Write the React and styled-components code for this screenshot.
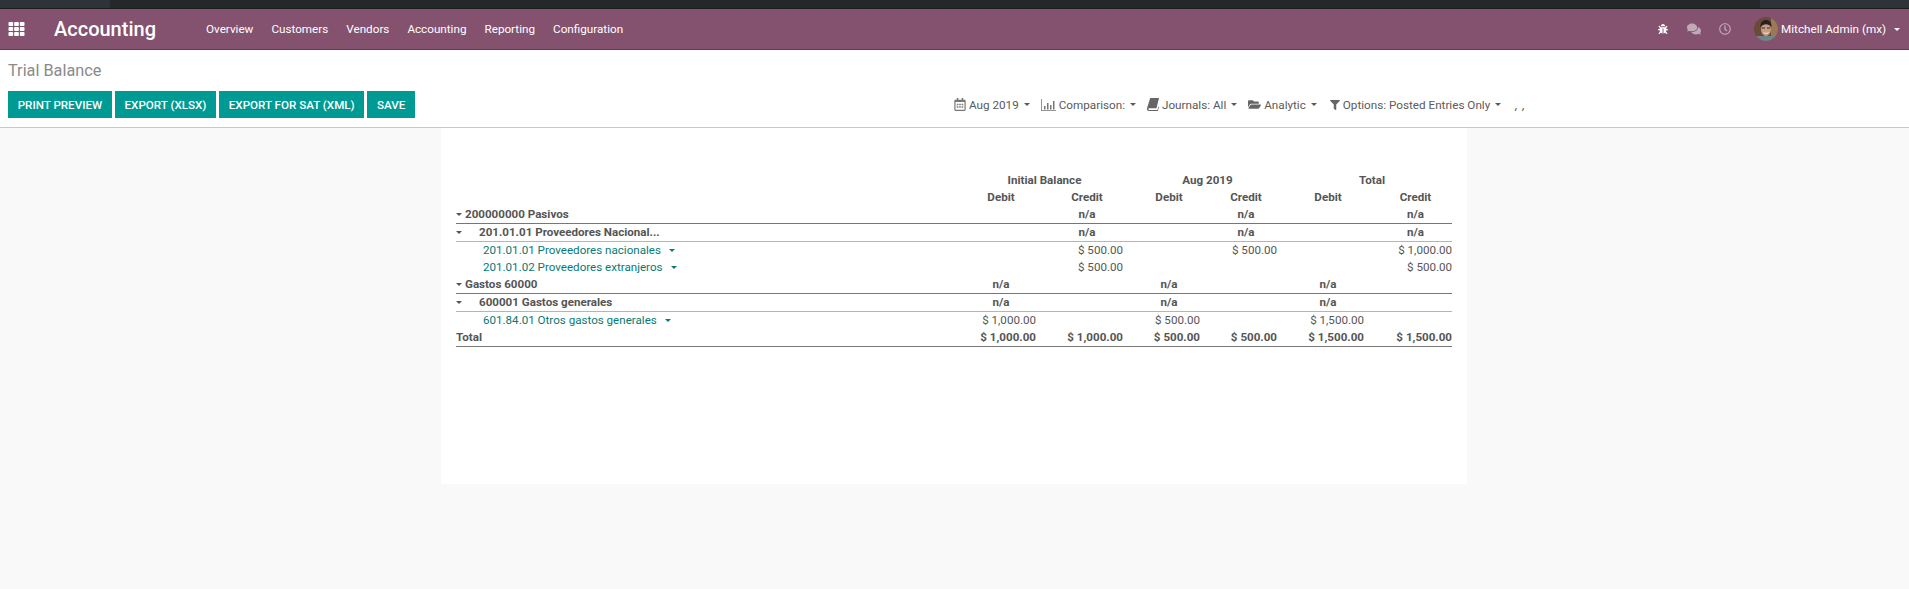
import React from 'react';
import styled, { createGlobalStyle } from 'styled-components';
import { FaBug, FaComments, FaFilter, FaFolderOpen, FaRegCalendarAlt, FaRegClock, FaTh } from 'react-icons/fa';

const GlobalStyle = createGlobalStyle`
    html, body {
        margin: 0;
        padding: 0;
        background-color: #f9f9f9;
        font-family: 'Roboto', 'Liberation Sans', sans-serif;
    }
`;

const Page = styled.div`
    display: flex;
    flex-direction: column;
    min-height: 589px;
    background-color: #f9f9f9;
`;

const WindowStrip = styled.div`
    display: flex;
    height: 9px;
    background-color: #24282b;
    box-shadow: inset 0 -1px 0 #1b1e20;
`;

const StripEdge = styled.div`
    width: ${props => props.$width}px;
    background-color: #2e3337;
    box-shadow: inset 0 -1px 0 #1b1e20;
`;

const StripFill = styled.div`
    flex: 1;
`;

const NavBar = styled.header`
    display: flex;
    align-items: center;
    box-sizing: border-box;
    height: 41px;
    padding: 0 9px 0 8px;
    background-color: #84526f;
    border-bottom: 1px solid #5f3a52;
    color: #fff;
`;

const AppsIcon = styled(FaTh)`
    width: 17px;
    height: 16px;
`;

const Brand = styled.span`
    margin-left: 29px;
    width: 152px;
    font-size: 20px;
    font-weight: 500;
`;

const Menu = styled.nav`
    display: flex;
    gap: 18px;
    font-size: 11.7px;
    font-weight: 400;
`;

const Systray = styled.div`
    display: flex;
    align-items: center;
    margin-left: auto;
`;

const TrayIcon = styled.span`
    display: flex;
    margin-right: ${props => props.$gap}px;
    font-size: ${props => props.$size}px;
    opacity: ${props => props.$dim ? 0.5 : 1};
`;

const UserName = styled.span`
    margin: 0 8px 0 3px;
    font-size: 11.7px;
`;

const Caret = styled.span`
    display: inline-block;
    width: 0;
    height: 0;
    border-top: 3.5px solid currentColor;
    border-left: 3.5px solid transparent;
    border-right: 3.5px solid transparent;
    vertical-align: middle;
    margin-left: ${props => props.$gap || 0}px;
`;

const ControlPanel = styled.section`
    display: flex;
    flex-direction: column;
    box-sizing: border-box;
    height: 78px;
    padding: 11px 0 0 8px;
    background-color: #fff;
    border-bottom: 1px solid #c8c8c8;
`;

const Title = styled.h1`
    margin: 0;
    height: 20px;
    line-height: 20px;
    font-size: 16.3px;
    font-weight: 400;
    color: #8a8a8a;
`;

const ActionRow = styled.div`
    display: flex;
    align-items: center;
    margin-top: 10px;
`;

const Actions = styled.div`
    display: flex;
    gap: 3px;
    width: 946px;
`;

const ActionButton = styled.button`
    height: 27px;
    padding: 0 9.7px;
    border: 0;
    background-color: #009a94;
    color: #fff;
    font-family: inherit;
    font-size: 11.6px;
    font-weight: 500;
    white-space: nowrap;
`;

const Filters = styled.div`
    display: flex;
    align-items: center;
    gap: 11px;
    font-size: 11.7px;
    color: #5a5a5a;
`;

const Filter = styled.span`
    display: flex;
    align-items: center;
    gap: 3px;
    margin-left: ${props => props.$lead || 0}px;
    white-space: nowrap;
`;

const FilterIcon = styled.span`
    display: flex;
    color: ${props => props.$color || '#666'};
    font-size: ${props => props.$size || 12}px;
`;

const Commas = styled.span`
    margin-left: 3px;
    font-size: 12px;
    font-style: italic;
    letter-spacing: 1px;
`;

const Sheet = styled.main`
    align-self: center;
    box-sizing: border-box;
    width: 1026px;
    height: 356px;
    margin-right: 1px;
    padding: 44px 15px 0;
    background-color: #fff;
`;

const Table = styled.table`
    width: 996px;
    table-layout: fixed;
    border-collapse: separate;
    border-spacing: 0;
    font-size: 11.6px;
    color: #555;
`;

const HeadCell = styled.th`
    padding: 0 0 0 15px;
    height: 17px;
    line-height: 17px;
    font-weight: 700;
    text-align: center;
    white-space: nowrap;
`;

const lineColors = { strong: '#777', light: '#b5b5b5' };

const Row = styled.tr`
    font-weight: ${props => props.$bold ? 700 : 400};

    td {
        border-bottom: ${props => props.$line ? `1px solid ${lineColors[props.$line]}` : '0'};
    }
`;

const NameCell = styled.td`
    padding: 0 0 0 ${props => props.$indent || 0}px;
    height: 17px;
    line-height: 17px;
    white-space: nowrap;
    color: ${props => props.$link ? '#067a75' : 'inherit'};
`;

const ValueCell = styled.td`
    padding: 0 0 0 15px;
    height: 17px;
    line-height: 17px;
    text-align: ${props => props.$na ? 'center' : 'right'};
    white-space: nowrap;
`;

const Fold = styled.span`
    display: inline-block;
    width: ${props => props.$width}px;
`;

const CalendarIcon = styled(FaRegCalendarAlt)`
    width: 12px;
    height: 13px;
`;

function BarsIcon() {
    return (
        <svg width="15" height="12" viewBox="0 0 15 12" fill="currentColor">
            <path d="M0 0h.8v11.200H15v.8H0z" />
            <path d="M3 7h1.500v3.500H3zM6 4h1.500v6.500H6zM9 6h1.500v4.500H9zM12 2h1.500v8.500H12z" />
        </svg>
    );
}

function BookIcon() {
    return (
        <svg width="12" height="13" viewBox="0 0 12 13" fill="currentColor">
            <path d="M3.200 0H12L9.500 10.300H2.300c-.7 0-1 .4-1 .8s.3.900 1 .900h8.200l.9-3.500.6.300L10.900 13H2C.8 13 0 12 0 11c0-.3 0-.6.100-.9z" />
        </svg>
    );
}

function Avatar() {
    return (
        <svg width="24" height="24" viewBox="0 0 24 24">
            <defs>
                <clipPath id="avatar-clip"><circle cx="12" cy="12" r="12" /></clipPath>
            </defs>
            <g clipPath="url(#avatar-clip)">
                <rect width="24" height="24" fill="#6a4a38" />
                <rect x="17" width="7" height="19" fill="#9a7a55" />
                <rect y="19" width="24" height="5" fill="#71848c" />
                <ellipse cx="12" cy="12.500" rx="5" ry="6.500" fill="#c99c84" />
                <path d="M6.500 10c-.5-4.500 2.500-7 5.500-7s6 2.500 5.500 7c-1.500-2-3.500-2.800-5.500-2.800S8 8 6.500 10z" fill="#2a211e" />
                <path d="M8 11h3M13 11h3" stroke="#3a2f2b" strokeWidth="1" />
                <path d="M9.500 15.500c1.700 1.200 3.300 1.200 5 0" stroke="#f2e6de" strokeWidth="1" fill="none" />
            </g>
        </svg>
    );
}

const menuItems = ['Overview', 'Customers', 'Vendors', 'Accounting', 'Reporting', 'Configuration'];
const actions = ['PRINT PREVIEW', 'EXPORT (XLSX)', 'EXPORT FOR SAT (XML)', 'SAVE'];
const columnWidths = [495, 85, 87, 77, 77, 87, 88];

const NA = 'n/a';
const rows = [
    { name: '200000000 Pasivos', fold: 9, bold: true, line: 'strong', values: ['', NA, '', NA, '', NA] },
    { name: '201.01.01 Proveedores Nacional...', fold: 23, bold: true, line: 'light', values: ['', NA, '', NA, '', NA] },
    { name: '201.01.01 Proveedores nacionales', indent: 27, link: true, values: ['', '$ 500.00', '', '$ 500.00', '', '$ 1,000.00'] },
    { name: '201.01.02 Proveedores extranjeros', indent: 27, link: true, values: ['', '$ 500.00', '', '', '', '$ 500.00'] },
    { name: 'Gastos 60000', fold: 9, bold: true, line: 'strong', values: [NA, '', NA, '', NA, ''] },
    { name: '600001 Gastos generales', fold: 23, bold: true, line: 'light', values: [NA, '', NA, '', NA, ''] },
    { name: '601.84.01 Otros gastos generales', indent: 27, link: true, values: ['$ 1,000.00', '', '$ 500.00', '', '$ 1,500.00', ''] },
    { name: 'Total', bold: true, line: 'strong', values: ['$ 1,000.00', '$ 1,000.00', '$ 500.00', '$ 500.00', '$ 1,500.00', '$ 1,500.00'] },
];

class App extends React.Component {
    render() {
        return (
            <React.Fragment>
                <GlobalStyle />
                <Page>
                    <WindowStrip>
                        <StripEdge $width={110} />
                        <StripFill />
                        <StripEdge $width={149} />
                    </WindowStrip>
                    <NavBar>
                        <AppsIcon />
                        <Brand>Accounting</Brand>
                        <Menu>
                            {menuItems.map(item => <span key={item}>{item}</span>)}
                        </Menu>
                        <Systray>
                            <TrayIcon $size={10} $gap={19}><FaBug /></TrayIcon>
                            <TrayIcon $size={14} $gap={18} $dim><FaComments /></TrayIcon>
                            <TrayIcon $size={12} $gap={23} $dim><FaRegClock /></TrayIcon>
                            <Avatar />
                            <UserName>Mitchell Admin (mx)</UserName>
                            <Caret />
                        </Systray>
                    </NavBar>
                    <ControlPanel>
                        <Title>Trial Balance</Title>
                        <ActionRow>
                            <Actions>
                                {actions.map(label => <ActionButton key={label}>{label}</ActionButton>)}
                            </Actions>
                            <Filters>
                                <Filter><FilterIcon $color="#777"><CalendarIcon /></FilterIcon>Aug 2019<Caret $gap={2} /></Filter>
                                <Filter><FilterIcon $color="#777"><BarsIcon /></FilterIcon>Comparison:<Caret $gap={2} /></Filter>
                                <Filter><FilterIcon><BookIcon /></FilterIcon>Journals: All<Caret $gap={2} /></Filter>
                                <Filter><FilterIcon $size={13}><FaFolderOpen /></FilterIcon>Analytic<Caret $gap={2} /></Filter>
                                <Filter $lead={2}><FilterIcon $size={10}><FaFilter /></FilterIcon>Options: Posted Entries Only<Caret $gap={2} /></Filter>
                                <Commas>, ,</Commas>
                            </Filters>
                        </ActionRow>
                    </ControlPanel>
                    <Sheet>
                        <Table>
                            <colgroup>
                                {columnWidths.map((width, i) => <col key={i} width={width} />)}
                            </colgroup>
                            <thead>
                                <tr>
                                    <HeadCell />
                                    <HeadCell colSpan={2}>Initial Balance</HeadCell>
                                    <HeadCell colSpan={2}>Aug 2019</HeadCell>
                                    <HeadCell colSpan={2}>Total</HeadCell>
                                </tr>
                                <tr>
                                    <HeadCell />
                                    <HeadCell>Debit</HeadCell>
                                    <HeadCell>Credit</HeadCell>
                                    <HeadCell>Debit</HeadCell>
                                    <HeadCell>Credit</HeadCell>
                                    <HeadCell>Debit</HeadCell>
                                    <HeadCell>Credit</HeadCell>
                                </tr>
                            </thead>
                            <tbody>
                                {rows.map(row => (
                                    <Row key={row.name} $bold={row.bold} $line={row.line}>
                                        <NameCell $indent={row.indent} $link={row.link}>
                                            {row.fold && <Fold $width={row.fold}><Caret /></Fold>}
                                            {row.name}
                                            {row.link && <Caret $gap={8} />}
                                        </NameCell>
                                        {row.values.map((value, i) => (
                                            <ValueCell key={i} $na={value === NA}>{value}</ValueCell>
                                        ))}
                                    </Row>
                                ))}
                            </tbody>
                        </Table>
                    </Sheet>
                </Page>
            </React.Fragment>
        );
    }
}

export default App;
